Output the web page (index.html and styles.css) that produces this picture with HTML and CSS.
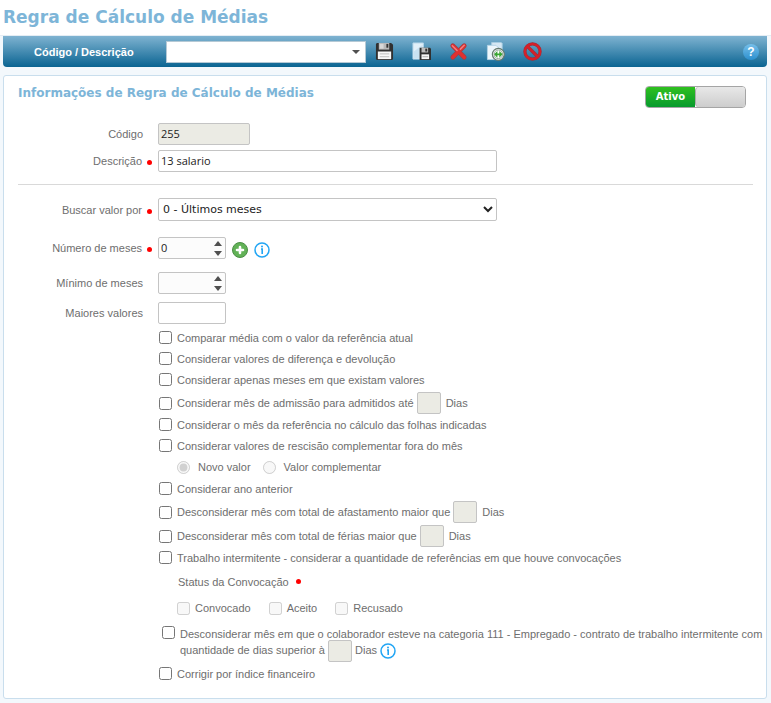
FILE: index.html
```html
<!DOCTYPE html>
<html lang="pt-BR">
<head>
    <meta charset="utf-8">
    <title>Regra de Cálculo de Médias</title>
    <link rel="stylesheet" href="styles.css">
</head>
<body>
    <header class="page-header">
        <h1>Regra de Cálculo de Médias</h1>
    </header>

    <div class="toolbar">
        <label class="toolbar-label" for="busca">Código / Descrição</label>
        <div class="combo">
            <select id="busca"><option></option></select>
        </div>
        <div class="tools">
            <button type="button" class="tool" aria-label="Salvar">
                <svg width="19" height="19" viewBox="0 0 20 20">
                    <path d="M2 1h15l2 2v15l-1 1H2l-1-1V2z" fill="#303030"/>
                    <rect x="4" y="1" width="11" height="7" fill="#b9b9b9"/>
                    <rect x="5" y="2" width="4" height="5" fill="#d8d8d8"/>
                    <rect x="12" y="2" width="2" height="4" fill="#333"/>
                    <rect x="3" y="10" width="14" height="8" fill="#f7f7f7"/>
                    <path d="M5 12.5h10M5 15.5h10" stroke="#bbb"/>
                </svg>
            </button>
            <button type="button" class="tool" aria-label="Salvar e novo">
                <svg width="19" height="19" viewBox="0 0 20 20">
                    <path d="M1 1h11v17H1z" fill="#e2f0f9" stroke="#b4d5ea"/>
                    <path d="M2 10l9-7v14H2z" fill="#c9e2f2"/>
                    <path d="M8 6h11l1 1v12H8z" fill="#303030"/>
                    <rect x="10" y="6" width="7" height="5" fill="#bcbcbc"/>
                    <rect x="14" y="7" width="2" height="3" fill="#333"/>
                    <rect x="10" y="13" width="8" height="5" fill="#f7f7f7"/>
                    <path d="M11 15.5h6" stroke="#aaa"/>
                </svg>
            </button>
            <button type="button" class="tool" aria-label="Excluir">
                <svg width="19" height="19" viewBox="0 0 20 20">
                    <path d="M4 4l12 12M16 4L4 16" stroke="#9c4048" stroke-width="5" stroke-linecap="round"/>
                    <path d="M4 4l12 12M16 4L4 16" stroke="#e0302f" stroke-width="3.500" stroke-linecap="round"/>
                    <path d="M3.500 4l5 5M16 3.500l-4 4" stroke="#f08082" stroke-width="1.500" stroke-linecap="round"/>
                </svg>
            </button>
            <button type="button" class="tool" aria-label="Duplicar">
                <svg width="19" height="19" viewBox="0 0 20 20">
                    <path d="M6 .5h10l1 1V15H6z" fill="#d6e8f4" stroke="#aacde2"/>
                    <path d="M1.500 3.500h9l3 3v12h-12z" fill="#edf6fb" stroke="#b2d2e5"/>
                    <circle cx="13" cy="13" r="6.300" fill="#f2f4f2" stroke="#667b70" stroke-width="1.300"/>
                    <circle cx="13" cy="13" r="4.500" fill="#fff" stroke="#94a69b"/>
                    <path d="M8.500 13l3.500-3.500v2.500h2V9.500l3.500 3.500-3.500 3.500V14h-2v2.500z" fill="#39a632"/>
                </svg>
            </button>
            <button type="button" class="tool" aria-label="Cancelar">
                <svg width="19" height="19" viewBox="0 0 20 20" fill="none">
                    <circle cx="10" cy="10" r="8" stroke="#98323a" stroke-width="3.400"/>
                    <path d="M5 5l10 10" stroke="#98323a" stroke-width="3.400"/>
                    <circle cx="10" cy="10" r="8" stroke="#d5202a" stroke-width="2.400"/>
                    <path d="M4.500 4.500l11 11" stroke="#d5202a" stroke-width="2.400"/>
                </svg>
            </button>
        </div>
        <button type="button" class="help" aria-label="Ajuda">?</button>
    </div>

    <main class="panel">
        <div class="panel-head">
            <h2>Informações de Regra de Cálculo de Médias</h2>
            <label class="toggle">
                <input type="checkbox" checked>
                <span class="toggle-text">Ativo</span>
                <span class="toggle-knob"></span>
            </label>
        </div>

        <form class="form">
            <div class="field">
                <label for="codigo">Código</label>
                <input type="text" id="codigo" class="box code" value="255" disabled>
            </div>
            <div class="field required">
                <label for="descricao">Descrição</label>
                <input type="text" id="descricao" class="box wide" value="13 salario">
            </div>
            <hr>
            <div class="field required">
                <label for="buscar">Buscar valor por</label>
                <select id="buscar" class="box wide"><option>0 - Últimos meses</option></select>
            </div>
            <div class="field required spaced">
                <label for="numero">Número de meses</label>
                <div class="spinner">
                    <input type="text" id="numero" class="box small" value="0">
                    <button type="button" class="up" aria-label="Aumentar"></button>
                    <button type="button" class="down" aria-label="Diminuir"></button>
                </div>
                <button type="button" class="icon add" aria-label="Adicionar">
                    <svg width="16" height="16" viewBox="0 0 16 16">
                        <circle cx="8" cy="8" r="7.500" fill="#62b257" stroke="#4b8f45"/>
                        <path d="M8 5v6M5 8h6" stroke="#fff" stroke-width="2.600" stroke-linecap="round"/>
                    </svg>
                </button>
                <button type="button" class="icon" aria-label="Informação">
                    <svg width="16" height="16" viewBox="0 0 16 16">
                        <circle cx="8" cy="8" r="7" fill="#fff" stroke="#22a5f4" stroke-width="1.500"/>
                        <path d="M7 7h1.200v5" fill="none" stroke="#22a5f4" stroke-width="1.600"/>
                        <circle cx="8" cy="4.500" r="1" fill="#22a5f4"/>
                    </svg>
                </button>
            </div>
            <div class="field">
                <label for="minimo">Mínimo de meses</label>
                <div class="spinner">
                    <input type="text" id="minimo" class="box small">
                    <button type="button" class="up" aria-label="Aumentar"></button>
                    <button type="button" class="down" aria-label="Diminuir"></button>
                </div>
            </div>
            <div class="field">
                <label for="maiores">Maiores valores</label>
                <input type="text" id="maiores" class="box small">
            </div>

            <div class="options">
                <label class="option"><input type="checkbox">Comparar média com o valor da referência atual</label>
                <label class="option"><input type="checkbox">Considerar valores de diferença e devolução</label>
                <label class="option"><input type="checkbox">Considerar apenas meses em que existam valores</label>
                <div class="option with-days">
                    <input type="checkbox" id="admissao">
                    <label for="admissao">Considerar mês de admissão para admitidos até</label>
                    <input type="text" class="box days" id="dias1" disabled>
                    <label for="dias1">Dias</label>
                </div>
                <label class="option"><input type="checkbox">Considerar o mês da referência no cálculo das folhas indicadas</label>
                <label class="option"><input type="checkbox">Considerar valores de rescisão complementar fora do mês</label>
                <div class="sub radios">
                    <label><input type="radio" name="valor" checked disabled>Novo valor</label>
                    <label><input type="radio" name="valor" disabled>Valor complementar</label>
                </div>
                <label class="option"><input type="checkbox">Considerar ano anterior</label>
                <div class="option with-days">
                    <input type="checkbox" id="afastamento">
                    <label for="afastamento">Desconsiderar mês com total de afastamento maior que</label>
                    <input type="text" class="box days" id="dias2" disabled>
                    <label for="dias2">Dias</label>
                </div>
                <div class="option with-days">
                    <input type="checkbox" id="ferias">
                    <label for="ferias">Desconsiderar mês com total de férias maior que</label>
                    <input type="text" class="box days" id="dias3" disabled>
                    <label for="dias3">Dias</label>
                </div>
                <label class="option"><input type="checkbox">Trabalho intermitente - considerar a quantidade de referências em que houve convocações</label>
                <div class="status">Status da Convocação<span class="dot"></span></div>
                <div class="sub checks">
                    <label><input type="checkbox" disabled>Convocado</label>
                    <label><input type="checkbox" disabled>Aceito</label>
                    <label><input type="checkbox" disabled>Recusado</label>
                </div>
                <div class="option-long">
                    <input type="checkbox" id="categoria">
                    <div class="option-text">
                        <label for="categoria">Desconsiderar mês em que o colaborador esteve na categoria 111 - Empregado - contrato de trabalho intermitente com quantidade de dias superior à</label>
                        <input type="text" class="box days" id="dias4" disabled>
                        <label for="dias4">Dias</label>
                        <button type="button" class="icon" aria-label="Informação">
                            <svg width="16" height="16" viewBox="0 0 16 16">
                                <circle cx="8" cy="8" r="7" fill="#fff" stroke="#22a5f4" stroke-width="1.500"/>
                                <path d="M7 7h1.200v5" fill="none" stroke="#22a5f4" stroke-width="1.600"/>
                                <circle cx="8" cy="4.500" r="1" fill="#22a5f4"/>
                            </svg>
                        </button>
                    </div>
                </div>
                <label class="option"><input type="checkbox">Corrigir por índice financeiro</label>
            </div>
        </form>
    </main>
</body>
</html>
```
FILE: styles.css
```css
* {
    box-sizing: border-box;
}
body {
    margin: 0;
    background-color: #f3f8fc;
    color: #6e6e6e;
    font-family: "Liberation Sans", Arial, sans-serif;
    font-size: 11px;
}
button {
    padding: 0;
    border: none;
    background: none;
    cursor: pointer;
}
svg {
    display: block;
}
h1, h2 {
    margin: 0;
    color: #7db5d8;
    font-family: "DejaVu Sans", Verdana, sans-serif;
    font-weight: bold;
}
.page-header {
    height: 36px;
    padding: 0 3px;
    background-color: #fff;
    border-bottom: 1px solid #e4edf4;
}
h1 {
    font-size: 17px;
    line-height: 35px;
}

/* toolbar */
.toolbar {
    display: flex;
    align-items: center;
    height: 31px;
    margin: 0 4px 0 3px;
    padding: 0 8px 0 31px;
    background: linear-gradient(#7fb3d1, #0a6492);
    border-radius: 0 0 4px 4px;
}
.toolbar-label {
    width: 132px;
    color: #fff;
    font-weight: bold;
}
.combo {
    position: relative;
    width: 200px;
}
.combo select {
    display: block;
    width: 100%;
    height: 22px;
    background-color: #fff;
    border: 1px solid #b5c9d5;
    appearance: none;
}
.combo::after {
    content: "";
    position: absolute;
    top: 9px;
    right: 6px;
    border: 4px solid transparent;
    border-top-color: #505050;
    border-bottom: none;
}
.tools {
    display: flex;
    gap: 18px;
    margin-left: 9px;
}
.help {
    width: 16px;
    height: 16px;
    margin-left: auto;
    border-radius: 50%;
    background: linear-gradient(#76bfea, #2c8fce);
    color: #fff;
    font: bold 12px/16px "Liberation Sans", Arial, sans-serif;
}

/* panel */
.panel {
    margin: 8px 4px 3px 3px;
    padding: 10px 13px 14px 14px;
    background-color: #fff;
    border: 1px solid #c9deed;
    border-radius: 3px;
}
.panel-head {
    display: flex;
    justify-content: space-between;
    height: 37px;
}
h2 {
    font-size: 12px;
    line-height: 14px;
}
.toggle {
    display: flex;
    width: 101px;
    height: 22px;
    margin-right: 7px;
    overflow: hidden;
    border: 1px solid #a5a5a5;
    border-radius: 4px;
    cursor: pointer;
}
.toggle input {
    position: absolute;
    opacity: 0;
}
.toggle-text {
    flex: 1;
    background: linear-gradient(#2fc01f, #079a2e);
    color: #fff;
    font: bold 10px/20px "DejaVu Sans", Verdana, sans-serif;
    text-align: center;
}
.toggle-knob {
    flex: 1;
    background: linear-gradient(#e8e8e8, #cdcdcd);
    border-left: 1px solid #aaa;
    border-radius: 4px 0 0 4px;
}

/* fields */
.form {
    display: flex;
    flex-direction: column;
}
.field {
    display: flex;
    align-items: center;
    margin-bottom: 5px;
}
.field > label {
    width: 140px;
    padding-right: 15px;
    text-align: right;
}
.required > label {
    position: relative;
    padding-right: 16px;
}
.required > label::after,
.dot {
    width: 5px;
    height: 5px;
    border-radius: 50%;
    background-color: #f00;
}
.required > label::after {
    content: "";
    position: absolute;
    top: 5px;
    right: 6px;
}
.box {
    height: 22px;
    padding: 0 2px 2px;
    background-color: #fff;
    border: 1px solid #c4c4c4;
    border-radius: 2px;
    color: #222;
    font: 11px "Open Sans", Tahoma, sans-serif;
}
.box:disabled {
    background-color: #ebebe4;
}
.code {
    width: 92px;
}
.wide {
    width: 339px;
}
select.wide {
    height: 23px;
    padding: 0;
    font-family: "DejaVu Sans", Verdana, sans-serif;
}
.small {
    width: 68px;
}
hr {
    width: 100%;
    margin: 7px 0 13px;
    border: none;
    border-top: 1px solid #d9d9d9;
}
.spaced {
    margin: 11px 0 13px;
}
.field + .field:not(.required) {
    margin-bottom: 8px;
}
.spinner {
    position: relative;
}
.spinner input {
    display: block;
    background-color: #fcfcfc;
}
.up, .down {
    position: absolute;
    right: 4px;
    border: 4px solid transparent;
}
.up {
    top: 4px;
    border-top: none;
    border-bottom: 5px solid #505050;
}
.down {
    bottom: 3px;
    border-bottom: none;
    border-top: 5px solid #505050;
}
.add {
    margin: 0 6px;
}
.spaced .icon {
    padding-top: 4px;
}

/* options */
.options {
    margin: -5px 0 0 141px;
}
.option, .sub, .sub label, .status {
    display: flex;
    align-items: center;
}
.option {
    gap: 5px;
    min-height: 21px;
}
.options input[type="checkbox"],
.options input[type="radio"] {
    flex: none;
    width: 13px;
    height: 13px;
    margin: 0;
}
.with-days {
    padding-top: 2px;
}
.days {
    width: 24px;
}
.with-days .days {
    margin-left: -2px;
}
.sub {
    height: 22px;
    padding-left: 18px;
}
.radios {
    gap: 12px;
}
.radios label {
    gap: 8px;
}
.status {
    gap: 7px;
    height: 27px;
    padding-left: 19px;
}
.checks {
    gap: 18px;
    height: 26px;
}
.checks label {
    gap: 5px;
}
.option-long {
    display: flex;
    align-items: flex-start;
    gap: 5px;
    margin: 5px -12px 4px 0;
    padding-left: 3px;
}
.option-text {
    line-height: 16px;
}
.option-text .days {
    margin: -3px 0;
    vertical-align: middle;
}
.option-text .icon {
    vertical-align: middle;
}
```
